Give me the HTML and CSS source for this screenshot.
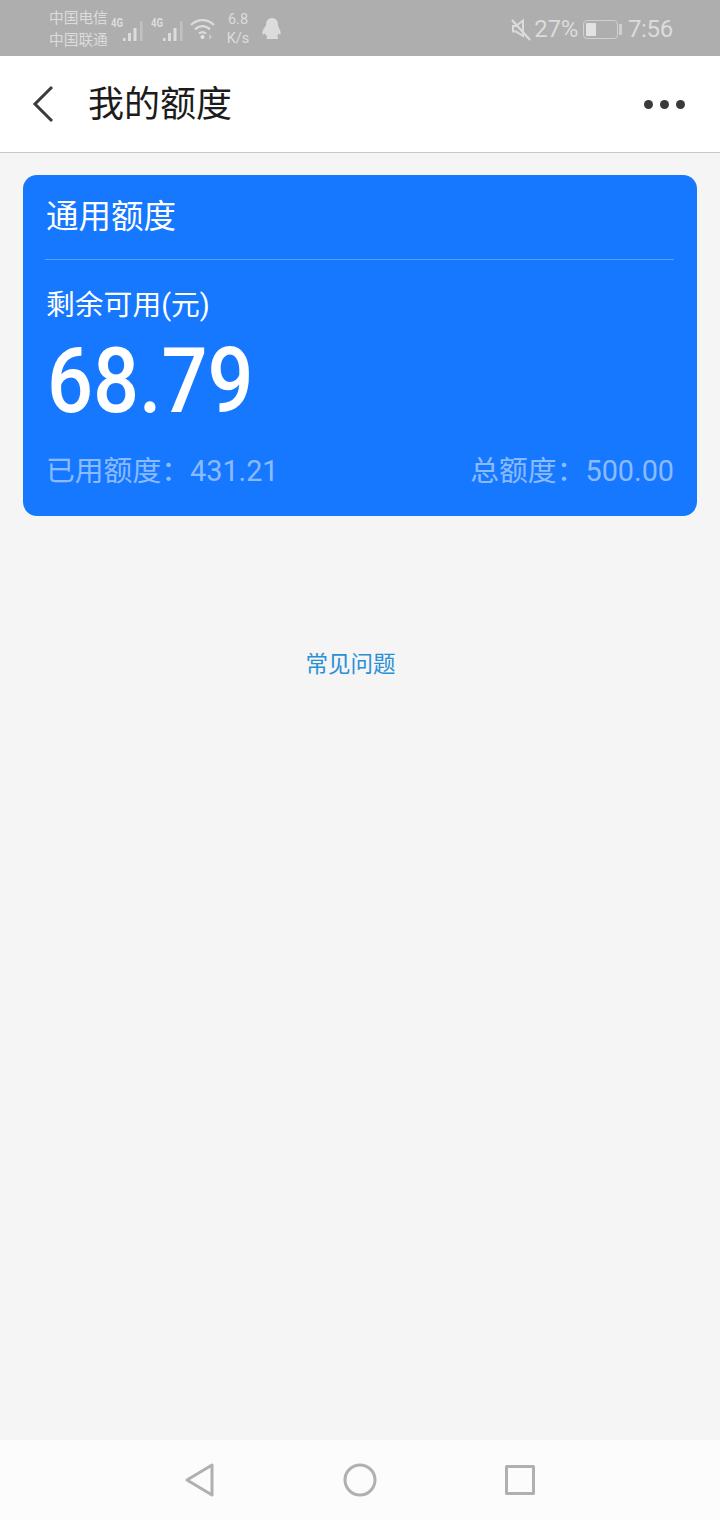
FILE: index.html
```html
<!DOCTYPE html>
<html lang="zh-CN">
<head>
  <meta charset="UTF-8">
  <meta name="viewport" content="width=device-width, initial-scale=1.0">
  <title>我的额度</title>
  <link rel="stylesheet" href="styles.css">
</head>
<body>
  <div class="phone">
    <div class="statusbar">
      <div class="carriers">
        <div>中国电信</div>
        <div>中国联通</div>
      </div>
      <div class="signal">
        <span class="net">4G</span>
        <svg width="21" height="22" viewBox="0 0 21 22"><g fill="#dcdcdc"><rect x="0" y="18" width="2.500" height="3"/><rect x="5" y="13" width="3" height="8"/><rect x="10.500" y="8" width="3" height="13"/><rect x="17" y="1" width="2.500" height="20" fill="#c2c2c2"/></g></svg>
      </div>
      <div class="signal">
        <span class="net">4G</span>
        <svg width="21" height="22" viewBox="0 0 21 22"><g fill="#dcdcdc"><rect x="0" y="18" width="2.500" height="3"/><rect x="5" y="13" width="3" height="8"/><rect x="10.500" y="8" width="3" height="13"/><rect x="17" y="1" width="2.500" height="20" fill="#c2c2c2"/></g></svg>
      </div>
      <svg class="wifi" width="26" height="22" viewBox="0 0 26 22" fill="none" stroke="#dcdcdc" stroke-width="2.200">
        <path d="M1 7C7.500 .5 17.500 .5 24 7"/>
        <path d="M5 11.500C9.500 7 15.500 7 20 11.500"/>
        <path d="M9 15.500C11 14 14 14 16 15.500"/>
        <circle cx="12.500" cy="19" r="2" fill="#e4e4e4" stroke="none"/>
        <path d="M19 16.500l3.500 2.500-3.500 2.500z" fill="#c8c8c8" stroke="none"/>
      </svg>
      <div class="speed">
        <div>6.8</div>
        <div>K/s</div>
      </div>
      <svg class="qq" width="20" height="24" viewBox="0 0 20 24"><path fill="#dcdcdc" d="M10 1c4 0 6 3 6 7 0 1 .5 2 1.500 4 1.200 2.500 1.500 5 .8 5.500-.5.300-1.200-.3-1.800-1.300-.2 1.300-.8 2.500-1.700 3.300 1 .4 1.500 1 1.500 1.700 0 .6-1 .8-2.500.8H6.700c-1.500 0-2.500-.2-2.500-.8 0-.7.500-1.300 1.500-1.700-.9-.8-2.900-2-3.200-3.300-.6 1-1.300 1.600-1.800 1.300-.7-.5-.4-3 .8-5.500C2.500 10 4 9 4 8c0-4 2-7 6-7z"/></svg>
      <div class="status-right">
        <svg width="22" height="24" viewBox="0 0 22 24" fill="none" stroke="#dcdcdc" stroke-width="2">
          <path d="M3 9h3l7-5.500V19l-7-4.500H3z"/>
          <path d="M2 3l18 20" stroke-width="2.200"/>
        </svg>
        <span class="pct">27%</span>
        <div class="battery"><div class="battery-fill"></div></div>
        <div class="battery-tip"></div>
        <span class="clock">7:56</span>
      </div>
    </div>

    <div class="header">
      <svg class="back" width="24" height="38" viewBox="0 0 24 38" fill="none" stroke="#3a3a3a" stroke-width="3"><path d="M21 2L4 19l17 17"/></svg>
      <h1>我的额度</h1>
      <div class="more"><i></i><i></i><i></i></div>
    </div>

    <div class="main">
      <div class="card">
        <div class="card-title">通用额度</div>
        <div class="card-body">
          <div class="label">剩余可用(元)</div>
          <div class="amount">68.79</div>
          <div class="totals">
            <span>已用额度<span class="colon">：</span>431.21</span>
            <span>总额度<span class="colon">：</span>500.00</span>
          </div>
        </div>
      </div>
      <a class="faq" href="#">常见问题</a>
    </div>

    <div class="navbar">
      <svg width="32" height="36" viewBox="0 0 32 36" fill="none" stroke="#b0b0b0" stroke-width="3" stroke-linejoin="round"><path d="M28 3v30L3 18z"/></svg>
      <svg width="34" height="34" viewBox="0 0 34 34" fill="none" stroke="#b0b0b0" stroke-width="3"><circle cx="17" cy="17" r="15"/></svg>
      <svg width="32" height="32" viewBox="0 0 32 32" fill="none" stroke="#b0b0b0" stroke-width="3" stroke-linejoin="round"><rect x="2.500" y="2.500" width="27" height="27"/></svg>
    </div>
  </div>
</body>
</html>
```

FILE: styles.css
```css
* { box-sizing: border-box; }
html, body { margin: 0; padding: 0; }
body { font-family: Roboto, "Noto Sans CJK SC", sans-serif; background: #f5f5f5; }
.phone { width: 720px; height: 1520px; display: flex; flex-direction: column; overflow: hidden; }

.statusbar { height: 56px; background: #aeaeae; color: #dcdcdc; display: flex; align-items: center; padding-left: 49px; padding-right: 47px; }
.carriers { font-size: 14.700px; line-height: 22px; width: 62px; white-space: nowrap; margin-top: 2px; }
.signal { display: flex; align-items: flex-end; width: 40px; height: 24px; margin-top: 4px; }
.net { font-size: 12px; font-weight: 700; line-height: 11px; align-self: flex-start; margin-top: 0; width: 12px; transform: scaleX(.8); transform-origin: left; }
.wifi { margin-left: -1px; margin-top: 1px; }
.speed { font-size: 14.500px; line-height: 19px; text-align: center; width: 30px; margin-left: 7px; margin-top: 1px; }
.qq { margin-left: 9px; margin-top: 2px; }
.status-right { margin-left: auto; display: flex; align-items: center; margin-top: 2px; }
.pct { font-size: 24px; margin-left: 2px; letter-spacing: -.3px; }
.battery { width: 35px; height: 19px; border: 1.500px solid #d0d0d0; border-radius: 4px; margin-left: 5px; padding: 2px; }
.battery-fill { width: 10px; height: 100%; background: #e2e2e2; border-radius: 1px; }
.battery-tip { width: 3px; height: 11px; background: #d0d0d0; margin-left: 1px; border-radius: 1px; }
.clock { font-size: 24px; margin-left: 6px; letter-spacing: -.3px; }

.header { height: 97px; background: #fff; border-bottom: 1px solid #c8c8c8; display: flex; align-items: center; padding-left: 31px; padding-right: 35px; }
.header h1 { margin: 0 0 6px 33px; font-size: 36px; font-weight: 400; color: #1c1c1c; }
.more { margin-left: auto; display: flex; gap: 7px; }
.more i { width: 9px; height: 9px; border-radius: 50%; background: #3a3a3a; }

.main { flex: 1; display: flex; flex-direction: column; align-items: stretch; padding: 22px 23px 0; }
.card { height: 341px; background: #1677ff; border-radius: 14px; padding: 0 23px 0 22px; color: #fff; }
.card-title { height: 85px; border-bottom: 1px solid rgba(255,255,255,.3); font-size: 32.500px; line-height: 84px; padding-left: 1px; }
.label { font-size: 28.800px; line-height: 40px; margin-top: 25px; margin-left: 1px; }
.amount { font-size: 90px; font-weight: 500; line-height: 100px; margin-top: 7px; margin-left: 2px; transform: scaleX(.9); transform-origin: left; }
.totals { display: flex; justify-content: space-between; font-size: 28.800px; line-height: 40px; color: rgba(255,255,255,.5); margin-top: 17px; margin-left: 1px; }
.colon { font-family: "Noto Sans CJK TC", sans-serif; }
.faq { display: block; text-align: center; margin-top: 133px; margin-right: 19px; font-size: 22.500px; line-height: 30px; color: #2a90d4; text-decoration: none; }

.navbar { height: 80px; background: #fcfcfc; display: flex; align-items: center; justify-content: center; gap: 127px; }
```
